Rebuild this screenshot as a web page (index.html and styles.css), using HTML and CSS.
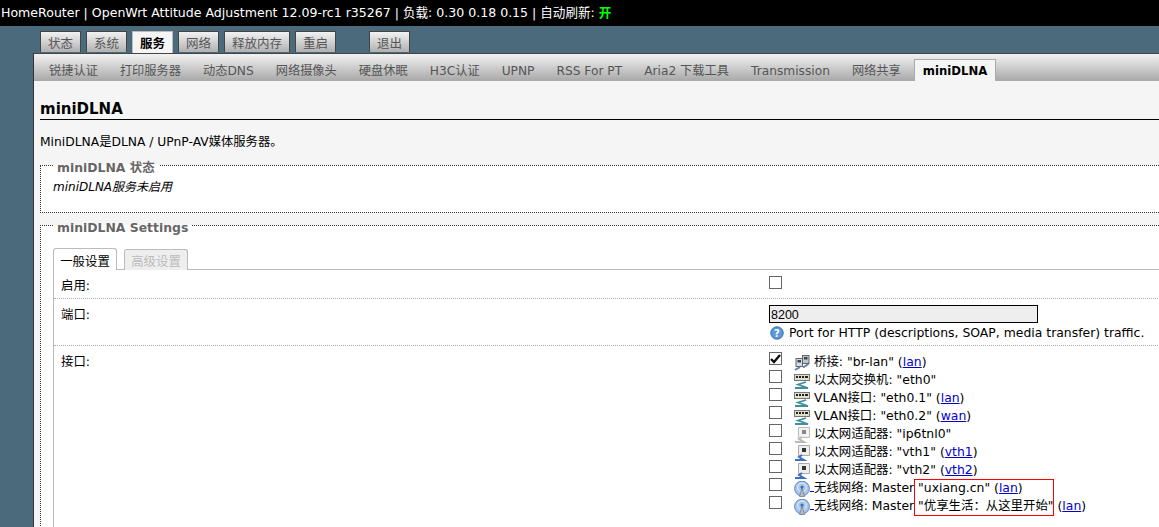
FILE: index.html
```html
<!DOCTYPE html>
<html lang="zh">
<head>
<meta charset="utf-8">
<title>miniDLNA</title>
<link rel="stylesheet" href="styles.css">
</head>
<body>
<svg class="defs" width="0" height="0" aria-hidden="true">
  <symbol id="i-bridge" viewBox="0 0 16 16">
    <rect x="8.5" y="0.5" width="6.5" height="8" fill="#b9c6d6" stroke="#666"/>
    <rect x="10" y="2" width="3.5" height="2.5" fill="#444"/>
    <rect x="2" y="3.5" width="6.5" height="8" fill="#d5dbe2" stroke="#666"/>
    <rect x="3.5" y="5" width="3.5" height="2.5" fill="#444"/>
    <path d="M1 15 L6 12 M9 12.5 L14.5 9" stroke="#5f7fae" stroke-width="2" fill="none"/>
  </symbol>
  <symbol id="i-switch" viewBox="0 0 16 16">
    <rect x="0.5" y="1.5" width="15" height="6" fill="#e0e0c8" stroke="#777"/>
    <path d="M2 4h2M5 4h2M8 4h2M11 4h3" stroke="#222" stroke-width="2"/>
    <path d="M1 15 H14 L4 11.5 L12 9" stroke="#3f8f9f" stroke-width="1.8" fill="none"/>
  </symbol>
  <symbol id="i-eth" viewBox="0 0 16 16">
    <path d="M4.5 0.5 H15.5 V10.5 H4.5 Z" fill="#eeeeee" stroke="#aaa"/>
    <rect x="8" y="3" width="4" height="4" fill="#333"/>
    <path d="M1 15 H10 L5 12 L8 10" stroke="#3f6fc0" stroke-width="2" fill="none"/>
  </symbol>
  <symbol id="i-eth-off" viewBox="0 0 16 16">
    <path d="M4.5 0.5 H15.5 V10.5 H4.5 Z" fill="#f2f2f2" stroke="#bbb"/>
    <rect x="8" y="3" width="4" height="4" fill="#888"/>
    <path d="M1 15 H10 L5 12 L8 10" stroke="#bbb" stroke-width="2" fill="none"/>
  </symbol>
  <symbol id="i-wifi" viewBox="0 0 16 16">
    <circle cx="8" cy="7.5" r="7.4" fill="#a9c6ea" stroke="#5c8ac6"/>
    <circle cx="8" cy="6.5" r="4.4" fill="none" stroke="#e8f0fa"/>
    <path d="M8 7 L5.5 15.5 H10.5 Z" fill="#b4bcc6" stroke="#6a7480" stroke-width="0.7"/>
    <circle cx="8" cy="6" r="1.6" fill="#3d6fb4"/>
  </symbol>
</svg>

<header class="topbar">HomeRouter | OpenWrt Attitude Adjustment 12.09-rc1 r35267 | 负载: 0.30 0.18 0.15 | 自动刷新: <span class="on">开</span></header>

<nav class="menu">
  <a class="menu-tab">状态</a>
  <a class="menu-tab">系统</a>
  <a class="menu-tab active">服务</a>
  <a class="menu-tab">网络</a>
  <a class="menu-tab">释放内存</a>
  <a class="menu-tab">重启</a>
  <a class="menu-tab logout">退出</a>
</nav>

<div class="shell">
  <nav class="subnav">
    <a class="sub">锐捷认证</a>
    <a class="sub">打印服务器</a>
    <a class="sub">动态DNS</a>
    <a class="sub">网络摄像头</a>
    <a class="sub">硬盘休眠</a>
    <a class="sub">H3C认证</a>
    <a class="sub">UPNP</a>
    <a class="sub">RSS For PT</a>
    <a class="sub">Aria2 下载工具</a>
    <a class="sub">Transmission</a>
    <a class="sub">网络共享</a>
    <a class="sub active">miniDLNA</a>
  </nav>

  <main class="content">
    <h2 class="title">miniDLNA</h2>
    <p class="desc">MiniDLNA是DLNA / UPnP-AV媒体服务器。</p>

    <fieldset class="section status">
      <legend>miniDLNA 状态</legend>
      <em>miniDLNA服务未启用</em>
    </fieldset>

    <fieldset class="section settings">
      <legend>miniDLNA Settings</legend>
      <div class="tabs">
        <span class="tab active">一般设置</span>
        <span class="tab disabled">高级设置</span>
      </div>
      <div class="panel">
        <div class="row row-enable">
          <label>启用:</label>
          <div><span class="check"></span></div>
        </div>
        <div class="row row-port">
          <label>端口:</label>
          <div>
            <div class="input">8200</div>
            <div class="help">
              <svg class="help-icon" width="14" height="14" viewBox="0 0 14 14"><circle cx="7" cy="7" r="6.2" fill="#5b9ad8" stroke="#2f6cb0"/><text x="7" y="10.5" class="help-q">?</text></svg>
              Port for HTTP (descriptions, SOAP, media transfer) traffic.
            </div>
          </div>
        </div>
        <div class="row row-iface">
          <label>接口:</label>
          <ul class="ifaces">
            <li><span class="check checked"><svg width="11" height="10" viewBox="0 0 11 10"><path d="M1 5 L4 8 L10 1" stroke="#111" stroke-width="2.4" fill="none"/></svg></span><svg class="ic"><use href="#i-bridge"/></svg><span class="tx">桥接: "br-lan" (<a>lan</a>)</span></li>
            <li><span class="check"></span><svg class="ic"><use href="#i-switch"/></svg><span class="tx">以太网交换机: "eth0"</span></li>
            <li><span class="check"></span><svg class="ic"><use href="#i-switch"/></svg><span class="tx">VLAN接口: "eth0.1" (<a>lan</a>)</span></li>
            <li><span class="check"></span><svg class="ic"><use href="#i-switch"/></svg><span class="tx">VLAN接口: "eth0.2" (<a>wan</a>)</span></li>
            <li><span class="check"></span><svg class="ic"><use href="#i-eth-off"/></svg><span class="tx">以太网适配器: "ip6tnl0"</span></li>
            <li><span class="check"></span><svg class="ic"><use href="#i-eth"/></svg><span class="tx">以太网适配器: "vth1" (<a>vth1</a>)</span></li>
            <li><span class="check"></span><svg class="ic"><use href="#i-eth"/></svg><span class="tx">以太网适配器: "vth2" (<a>vth2</a>)</span></li>
            <li><span class="check"></span><svg class="ic"><use href="#i-wifi"/></svg><span class="tx"><span class="ul"></span>无线网络: Master "uxiang.cn" (<a>lan</a>)</span></li>
            <li><span class="check"></span><svg class="ic"><use href="#i-wifi"/></svg><span class="tx"><span class="ul"></span>无线网络: Master "优享生活&#xFF1A;从这里开始" (<a>lan</a>)</span><span class="redbox"></span></li>
          </ul>
        </div>
      </div>
    </fieldset>
  </main>
</div>
</body>
</html>
```
FILE: styles.css
```css
* { box-sizing: border-box; }
html, body { margin: 0; height: 527px; overflow: hidden; }
body {
  width: 1159px;
  background: #4b6a7b;
  color: #000;
  font: 12.5px/18px "DejaVu Sans", "Noto Sans CJK SC", sans-serif;
}
.defs { position: absolute; }

.topbar {
  height: 26px;
  background: #000;
  color: #fff;
  padding: 4px 0 0 1px;
  font-size: 12.55px;
  white-space: nowrap;
}
.on { color: #0f0; font-weight: bold; }

.menu {
  display: flex;
  height: 27px;
  padding: 5px 0 0 40px;
  gap: 5px;
}
.menu-tab {
  height: 21px;
  padding: 3px 7px 0;
  background: linear-gradient(#f2f2f2, #b0b0b0);
  border: 1px solid #444;
  border-bottom: 0;
  color: #555;
  white-space: nowrap;
}
.menu-tab.active { background: #f5f5f5; color: #000; font-weight: bold; border-color: #bbb; height: 22px; }
.menu-tab.logout { margin-left: 28px; }

.shell {
  margin-left: 33px;
  width: 1140px;
  border-top: 1px solid #444;
  border-left: 1px solid #333;
  background: #f5f5f5;
  height: 500px;
}
.subnav {
  display: flex;
  height: 27px;
  padding: 5px 0 0 6px;
  background: linear-gradient(#f2f2f2, #a8a8a8);
  gap: 4px;
}
.sub { padding: 3px 9px 0; color: #555; white-space: nowrap; font-size: 12.23px; }
.sub.active {
  background: #f5f5f5;
  color: #000;
  font-weight: bold;
  font-size: 11.7px;
  border: 1px solid #aaa;
  border-bottom: 0;
  padding: 2px 8px 0;
}

.content { padding: 0 0 0 6px; }
.title {
  margin: 0;
  padding-top: 18px;
  height: 39px;
  font-size: 15px;
  line-height: 20px;
  border-bottom: 1px solid #000;
}
.desc { margin: 13px 0 0; height: 21px; font-size: 12.3px; }

fieldset.section {
  margin: 0;
  padding: 0 0 0 12px;
  border: 1px dotted #333;
  background: #fff;
  min-width: 0;
  font-size: 12.42px;
}
fieldset.section legend {
  margin-left: 0;
  padding: 6px 4px 0;
  font-weight: bold;
  color: #666;
  line-height: 16px;
}
.status { height: 59px; margin-bottom: 1px !important; }
.status em { display: block; font-size: 12px; margin-top: 2px; }
.settings { height: 400px; padding-top: 12px !important; }

.tabs { display: flex; gap: 7px; height: 22px; align-items: flex-end; position: relative; z-index: 1; margin-bottom: -1px; }
.tab {
  width: 64px;
  height: 22px;
  padding-top: 2px;
  border: 1px solid #bbb;
  border-bottom: 0;
  border-radius: 3px 3px 0 0;
  text-align: center;
  line-height: 22px;
  background: #fff;
}
.tab.disabled { background: #eee; color: #bbb; height: 21px; padding-top: 1px; }

.panel {
  border-top: 1px solid #bbb;
  border-left: 1px solid #bbb;
  height: 360px;
}
.row {
  display: grid;
  grid-template-columns: 708px 1fr;
  padding-left: 7px;
  border-bottom: 1px dotted #aaa;
}
.row label { padding-top: 1px; }
.row-enable { height: 29px; padding-top: 6px; }
.row-port { height: 47px; padding-top: 6px; }
.row-iface { padding-top: 5px; border-bottom: 0; }
.row-iface label { padding-top: 2px; }

.check {
  display: inline-flex;
  width: 13px;
  height: 13px;
  border: 1px solid #666;
  background: #fff;
  align-items: center;
  justify-content: center;
}
.input {
  width: 269px;
  height: 18px;
  border: 1px solid #000;
  background: #eee;
  padding-left: 1px;
  font: 12.5px/18px "Liberation Sans", sans-serif;
}
.help { display: flex; align-items: center; gap: 5px; margin-top: 1px; white-space: nowrap; }
.help-icon { flex: none; margin-left: 1px; }
.help-q { fill: #fff; font: bold 10px "DejaVu Sans", sans-serif; text-anchor: middle; }

.ifaces { list-style: none; margin: 0; padding: 0; }
.ifaces li { display: flex; align-items: flex-start; height: 18px; white-space: nowrap; position: relative; }
.ifaces .check { flex: none; margin-top: 1px; }
.ic { width: 16px; height: 16px; flex: none; margin: 4px 4px 0 12px; }
.tx { line-height: 18px; padding-top: 2px; }
.ifaces a { color: #00c; text-decoration: underline; }
.ul { display: inline-block; width: 4px; height: 12px; margin-left: -4px; border-bottom: 1px solid #00c; }
.redbox {
  position: absolute;
  left: 145px;
  top: -16px;
  width: 140px;
  height: 37px;
  border: 1px solid #f00;
}
```
